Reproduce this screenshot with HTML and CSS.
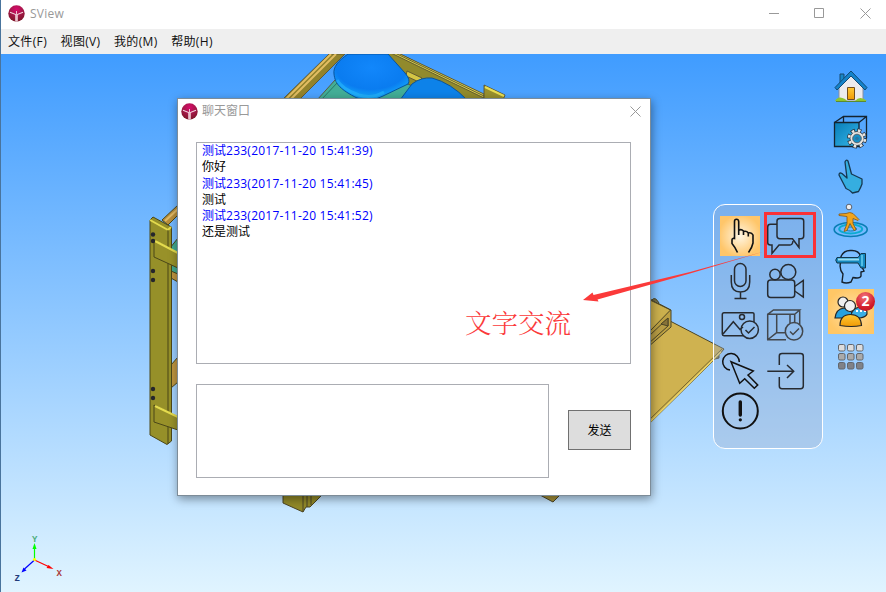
FILE: index.html
```html
<!doctype html>
<html lang="zh-CN">
  <head>
    <meta charset="UTF-8" />
    <meta name="viewport" content="width=device-width, initial-scale=1.0" />
    <title>SView</title>
    <link rel="stylesheet" href="styles.css">
  </head>
  <body>
    <svg class="defs" width="0" height="0">
      <defs>
        <radialGradient id="logo-fill" cx=".5" cy=".25" r=".8">
          <stop offset="0" stop-color="#d80a6c" />
          <stop offset=".5" stop-color="#a31848" />
          <stop offset="1" stop-color="#761522" />
        </radialGradient>
        <radialGradient id="pillow" cx=".5" cy=".3" r=".75">
          <stop offset="0" stop-color="#1287fb" />
          <stop offset=".62" stop-color="#0a7cf0" />
          <stop offset=".85" stop-color="#12a5fa" />
          <stop offset="1" stop-color="#075db9" />
        </radialGradient>
        <linearGradient id="blue" x1="0" y1="0" x2="1" y2="1">
          <stop offset="0" stop-color="#077db8" />
          <stop offset="1" stop-color="#36b6e8" />
        </linearGradient>
        <linearGradient id="orange" x1="0" y1="0" x2="0" y2="1">
          <stop offset="0" stop-color="#ffc936" />
          <stop offset="1" stop-color="#f09a05" />
        </linearGradient>
      </defs>
      <symbol id="logo" viewBox="0 0 17 17">
        <circle cx="8.5" cy="8.5" r="8.2" fill="url(#logo-fill)" />
        <path d="M7.8 16.5V9.5L2 7.2M9.2 16.5V9.5L15 7.2" fill="none" stroke="#f3d7df" stroke-width="1.1" />
        <path d="M8.5 16.6V6" fill="none" stroke="#e9c0cd" stroke-width="1" />
      </symbol>
    </svg>

    <div class="app">
      <header class="titlebar">
        <svg class="logo"><use href="#logo" /></svg>
        <span class="title">SView</span>
        <div class="window-buttons">
          <svg viewBox="0 0 11 11"><path d="M1 5.5h10" /></svg>
          <svg viewBox="0 0 11 11"><path d="M.5.5h9v9h-9z" /></svg>
          <svg viewBox="0 0 11 11"><path d="M.5.5l10 10M10.500.5l-10 10" /></svg>
        </div>
      </header>

      <nav class="menu">
        <span>文件(F)</span>
        <span>视图(V)</span>
        <span>我的(M)</span>
        <span>帮助(H)</span>
      </nav>

      <main class="viewport">
        <svg class="scene" viewBox="0 54 886 538">
          <!-- top of the bed -->
          <g stroke="#5a5430" stroke-width=".900" stroke-linejoin="round">
            <path d="M335 80L317 100H415V82z" fill="#43ae97" />
            <path d="M338 82l-17 18" fill="none" stroke="#24705f" />
            <path d="M329 54L282 100H299L345 54z" fill="#93832c" />
            <path d="M331 54L285 100M336 54L290 100" fill="none" stroke="#e2bd62" stroke-width="2" />
            <path d="M350 53H398L484 95V100H440L408 84z" fill="#918a2c" />
            <path d="M398 53L484 94V98L391 53z" fill="#d9cf4b" />
            <path d="M395 53L484 96" fill="none" />
            <path d="M484 85L505 95L503 100H484z" fill="#98902e" />
            <path d="M485 87l19 9" stroke="#e9df53" stroke-width="2" />
            <path d="M407 71l15 7-3 4-13-6z" fill="#d4c544" />
          </g>
          <path d="M348 54C338 61 333 67 334 74C335 84 341 90 357 98Q370 103 383 96L408 84Q411 80 405 73L388 54z" fill="url(#pillow)" stroke="#07539d" />
          <path d="M337 80Q342 89 359 95Q372 99 384 92" fill="none" stroke="#2bbafb" stroke-width="3" opacity=".55" />
          <path d="M400 100L412 84Q421 77 432 78Q451 83 467 100z" fill="#0d82e9" stroke="#07539d" />

          <!-- left post -->
          <g stroke="#4b4719" stroke-linejoin="round">
            <path d="M162 220L178 205V215L168 225z" fill="#b78e3b" />
            <path d="M165 221l13-12" stroke="#dfb865" stroke-width="2" />
            <path d="M170 248L178 238V275H171z" fill="#42a98f" />
            <path d="M171 271l7 3v8l-7-4z" fill="#be9540" />
            <path d="M171 365l7-8v25l-7 6z" fill="#be9540" />
            <path d="M150 220L153 217L171.500 227V441L167 444.500L150 435z" fill="#969029" />
            <path d="M150 220l18 10 3-3" fill="none" stroke="#e3da4e" stroke-width="2" />
            <path d="M168 230V444" fill="none" />
            <path d="M154 240L178 253V268L154 257z" fill="#989129" />
            <path d="M155 241l23 12" stroke="#e5dc4e" stroke-width="2" />
            <path d="M154 405L178 417V430L154 422z" fill="#989129" />
            <path d="M155 406l23 11" stroke="#e5dc4e" stroke-width="2" />
          </g>
          <g fill="#25262c">
            <circle cx="153" cy="234.500" r="2.200" />
            <circle cx="153" cy="241" r="2.200" />
            <circle cx="153" cy="271" r="2.200" />
            <circle cx="153" cy="280" r="2.200" />
            <circle cx="153" cy="389" r="2.200" />
            <circle cx="153" cy="398" r="2.200" />
          </g>

          <!-- desk on the right, feet below -->
          <g stroke="#4b4526" stroke-linejoin="round">
            <path d="M714 357l5-4v5l-4 1z" fill="#777044" />
            <path d="M648 310L672 322L724 349L720 354L648 425z" fill="#cfb250" />
            <path d="M722 349L648 421" fill="none" stroke="#78672c" />
            <path d="M721 352L648 424" fill="none" stroke="#ecd568" stroke-width="1.500" />
            <path d="M652 300q3-4 7 3" fill="#777044" />
            <path d="M648 298L671 310V327L648 347z" fill="#bda143" />
            <path d="M648 299L670.500 310L648 333z" fill="#cbb04d" />
            <path d="M648 337L668 318V326L648 344z" fill="#b89d45" />
            <path d="M661 324l7-6v8z" fill="#877338" />
            <path d="M283 494V503L303 512L306 507H310L322 495z" fill="#918928" />
            <path d="M303 495v17M307 495v12M311 495v10" fill="none" />
            <path d="M540 495l13 7 7-7z" fill="#a5913a" />
          </g>

          <!-- axes -->
          <g stroke-width="1.200">
            <path d="M34.500 560V547" stroke="#0f0" />
            <path d="M34.500 543l2 6h-4z" fill="#0f0" />
            <path d="M34.500 560l15 7" stroke="red" />
            <path d="M53.500 569l-7-1 2-3z" fill="red" />
            <path d="M34.500 560l-10 9" stroke="blue" />
            <path d="M21.500 572.500l2-5 3 3z" fill="blue" />
            <circle cx="34.500" cy="559.500" r="1.600" fill="#ff0" />
          </g>
          <g class="axis-label">
            <text x="32" y="542" fill="#4eae7c">Y</text>
            <text x="56.500" y="575.500" fill="#a93a3a">X</text>
            <text x="14.500" y="580.500" fill="#223c7c">Z</text>
          </g>
        </svg>

        <aside class="sidebar">
          <svg viewBox="0 0 46 45">
            <path d="M11 22V37H35V22L23 10z" fill="#ecebee" stroke="#8a8fa0" />
            <path d="M12 19V10h4v6" fill="#1787c8" stroke="#17496d" />
            <path d="M7 23.500L23 7L39 23.500L37 26L23 12L9 26z" fill="#1583c9" stroke="#124a75" />
            <path d="M19.500 23.500h7v12h-7z" fill="url(#orange)" stroke="#714c1e" />
            <path d="M7 37q3-6 10-2l2 2zM27 37q5-6 12 0z" fill="#8fc52f" />
            <path d="M8 37.500H38" stroke="#5c8a31" />
          </svg>
          <svg viewBox="0 0 46 45">
            <path d="M6.500 13.500L15.500 7.500H38.500V29L31 37M31 13.500L38.500 7.500M15.500 7.500V13" fill="none" stroke="#142431" stroke-width="1.300" />
            <path d="M6.500 13.500H31V37.500H6.500z" fill="url(#blue)" stroke="#142431" stroke-width="1.300" />
            <circle cx="29" cy="29.500" r="8" fill="none" stroke="#26323e" stroke-width="4" stroke-dasharray="4 2.280" />
            <circle cx="29" cy="29.500" r="7" fill="#e8e6e2" stroke="#26323e" stroke-width=".800" />
            <circle cx="29" cy="29.500" r="8" fill="none" stroke="#e8e6e2" stroke-width="2.600" stroke-dasharray="2.600 3.680" stroke-dashoffset="-.700" />
            <circle cx="29" cy="29.500" r="4.300" fill="#168fc4" stroke="#54616d" />
            <circle cx="29" cy="29.500" r="1.800" fill="#2a76a1" />
          </svg>
          <svg viewBox="0 0 46 45">
            <path d="M17 8Q18 5 20 7L23.500 20L34 25V30Q33 33 30.500 37.500L24.500 39Q22 36 18 34.500L11 21Q11 18 14 19.500L19 24z" fill="#35aee0" stroke="#173951" stroke-width="1.300" stroke-linejoin="round" />
          </svg>
          <svg viewBox="0 0 46 45">
            <g fill="none" stroke="#087eb4">
              <ellipse cx="22.700" cy="30.500" rx="16.500" ry="7" stroke-width="1.600" />
              <ellipse cx="22.700" cy="30" rx="11.500" ry="4.500" stroke="#0cabd2" stroke-width="2" />
              <ellipse cx="22.700" cy="30" rx="6" ry="2" />
            </g>
            <path d="M11 15l7-.500q4-2 7 0l6 6-1 1-5-2v5l3 6-2 1-4-7-3 7-3 1 3-8v-7l-8-1z" fill="#f2a51d" stroke="#875719" stroke-width=".800" />
            <circle cx="21" cy="8" r="2.800" fill="#eee" stroke="#5a6270" />
          </svg>
          <svg viewBox="0 0 46 45">
            <path d="M12.500 14Q15 6 23 6.500Q31 6 33 13L34 23L36 27L33 28L33 32Q32 35 25 33.500L23 38Q18 40 14 38L15 30Q11 25 12.500 19" fill="none" stroke="#15212c" stroke-width="1.400" />
            <path d="M9 13.500H30L33 9.500H37.500V24H33L30 19H9Q6.500 16 9 13.500z" fill="#168ac0" stroke="#12364b" />
            <path d="M10 15.500h21" stroke="#9addf1" stroke-width="2" />
            <path d="M34 11v11" stroke="#53bee5" stroke-width="2" />
          </svg>
          <div class="people active">
            <svg viewBox="0 0 46 45">
              <g stroke="#252525" stroke-width="1.200">
                <path d="M7 29q1-9 9-10 9 1 9 10z" fill="#25a1df" />
                <circle cx="15" cy="13" r="5" fill="#eee" />
                <path d="M23 27q1-8 9-9 8 1 7 7-1 3-7 4z" fill="#3aaee5" />
                <circle cx="22" cy="17" r="5.500" fill="#f1f1f1" />
                <path d="M12 36.500q0-11 10.500-11t11 11q-10 2-21.500 0z" fill="url(#orange)" />
              </g>
              <path d="M28 22h2m2 0h2m2 0h2" stroke="#fff" stroke-width="2" />
            </svg>
            <span class="badge">2</span>
          </div>
          <svg viewBox="0 0 46 45">
            <g stroke="#61666e">
              <g fill="#ddd">
                <rect x="10.500" y="10.500" width="6.500" height="6.500" rx="1.500" />
                <rect x="19.500" y="10.500" width="6.500" height="6.500" rx="1.500" />
                <rect x="28.500" y="10.500" width="6.500" height="6.500" rx="1.500" />
              </g>
              <g fill="#aaa">
                <rect x="10.500" y="19.500" width="6.500" height="6.500" rx="1.500" />
                <rect x="19.500" y="19.500" width="6.500" height="6.500" rx="1.500" />
                <rect x="28.500" y="19.500" width="6.500" height="6.500" rx="1.500" />
              </g>
              <g fill="#808287">
                <rect x="10.500" y="28.500" width="6.500" height="6.500" rx="1.500" />
                <rect x="19.500" y="28.500" width="6.500" height="6.500" rx="1.500" />
                <rect x="28.500" y="28.500" width="6.500" height="6.500" rx="1.500" />
              </g>
            </g>
          </svg>
        </aside>

        <section class="tools">
          <svg class="selected" viewBox="0 0 40 40">
            <path d="M17.500 36.500Q15 31 12 27.500V24Q12 22 14.500 22.500V5.500Q14.500 3.300 16.500 3.300T18.700 5.500V19V14.500Q21 12.500 23.500 15V19V15.500Q26.500 14.500 28.300 17V20.500V17Q31.500 16 33 19V27Q32 32 28.500 36.500" stroke-width="1.600" />
          </svg>
          <div class="chat-tool">
            <svg viewBox="0 0 40 40">
              <path d="M14 2.500H35Q37.700 2.500 37.700 5V20Q37.700 22.700 35 22.700H33V31.500L26.500 22.700H14Q11 22.700 11 20V5Q11 2.500 14 2.500z" />
              <path d="M11 8.300H4.500Q1.700 8.300 1.700 11V26.500Q1.700 29 4.500 29H6V37.500L13 29H24Q26.500 29 27 25" />
            </svg>
          </div>
          <svg viewBox="0 0 40 40">
            <rect x="14.500" y="2.500" width="11.500" height="23" rx="5.750" />
            <path d="M11.300 14V21Q11.300 31 20.500 31T29.700 21V14M20.500 31V37.500M14.500 37.500H26.500" />
          </svg>
          <svg viewBox="0 0 40 40">
            <circle cx="9" cy="13.500" r="5.200" />
            <circle cx="22.300" cy="11" r="7.500" />
            <rect x="1.700" y="19" width="27" height="17.500" rx="3" />
            <path d="M28.700 25.500L37.300 19.500V36L28.700 30" />
          </svg>
          <svg viewBox="0 0 40 40">
            <path d="M34 16V8Q34 6.700 32.500 6.700H4Q2.300 6.700 2.300 8.500V28Q2.300 29.700 4 29.700H23M3 28L13.300 15.700L20 23.500L23 21" />
            <circle cx="22" cy="11" r="2.500" />
            <circle cx="29.700" cy="23.700" r="8.700" />
            <path d="M25.500 24l3 3 6-6" />
          </svg>
          <svg class="gray" viewBox="0 0 40 40">
            <path d="M20 33.700H1.700V8.300H28.700V17M1.700 8.300L7.500 4H33.700L28.700 8.300M33.700 4V18M10.700 8.300V26.700L2 33.500M10.700 26.700H20M24 8V17" />
            <circle cx="28" cy="25.300" r="8.700" />
            <path d="M24 25.500l3 3 6-6" />
          </svg>
          <svg class="black" viewBox="0 0 40 40">
            <path d="M10 19A8.300 8.300 0 1 1 19.300 11" />
            <path d="M11 10.700L33.300 20L28 24L37.700 34L34.300 37.300L24.700 27.700L19.700 32.300z" />
          </svg>
          <svg viewBox="0 0 40 40">
            <path d="M13.300 14V5Q13.300 2.500 16 2.500H34.500Q37.300 2.500 37.300 5V35Q37.300 37.700 34.500 37.700H16Q13.300 37.700 13.300 35V26M1.300 20.300H27.700M21 14L27.700 20.300L21 27" />
          </svg>
          <svg class="black" viewBox="0 0 40 40">
            <circle cx="20.300" cy="20" r="17.500" stroke-width="2" />
            <path d="M20.300 11V24" stroke-width="3.400" stroke-linecap="round" />
            <circle cx="20.300" cy="28.800" r=".9" />
          </svg>
        </section>

        <section class="dialog">
          <header class="dialog-title">
            <svg class="logo"><use href="#logo" /></svg>
            <span>聊天窗口</span>
            <svg class="close" viewBox="0 0 11 11"><path d="M.5.5l10 10M10.500.5l-10 10" /></svg>
          </header>
          <div class="messages">
            <p class="sender">测试<span>233(2017-11-20 15:41:39)</span></p>
            <p>你好</p>
            <p class="sender">测试<span>233(2017-11-20 15:41:45)</span></p>
            <p>测试</p>
            <p class="sender">测试<span>233(2017-11-20 15:41:52)</span></p>
            <p>还是测试</p>
          </div>
          <div class="compose">
            <div class="input"></div>
            <button class="send">发送</button>
          </div>
        </section>

        <svg class="callout" viewBox="0 54 886 538">
          <path d="M764 251.500L690 273.500L597.500 299.500L598.500 301.500L583 300L592.500 292.500L593.500 295L690 272z" fill="#fb3a3a" />
          <text x="465" y="333">文字交流</text>
        </svg>
      </main>
    </div>
  </body>
</html>
```
FILE: styles.css
```css
*,
*::after {
  box-sizing: border-box;
}

html,
body {
  height: 100%;
}

body {
  margin: 0;
  overflow: hidden;
  font-family: "Open Sans", "Noto Sans CJK SC", sans-serif;
  font-size: 12px;
  color: #111;
}

svg {
  display: block;
}

.defs {
  position: absolute;
}

.app {
  height: 592px;
  display: flex;
  flex-direction: column;
  border-left: 1px solid #49749d;
}

.titlebar {
  height: 29px;
  display: flex;
  align-items: center;
  padding: 0 15px 2px 7px;
  background: #fff;
  color: #999;
}

.logo {
  width: 17px;
  height: 17px;
}

.title {
  margin-left: 5px;
  letter-spacing: 0.25px;
}

.window-buttons {
  display: flex;
  gap: 35px;
  margin-left: auto;
}

.window-buttons svg,
.close {
  width: 11px;
  height: 11px;
  fill: none;
  stroke: #999;
}

.menu {
  height: 25px;
  display: flex;
  align-items: center;
  gap: 13.5px;
  padding: 0 0 1px 7px;
  background: #efefef;
  letter-spacing: 0.35px;
}

.viewport {
  position: relative;
  flex: 1;
  overflow: hidden;
  background: linear-gradient(#409cff, #e0f4ff);
}

.scene,
.callout {
  position: absolute;
  top: 0;
  left: -1px;
  width: 886px;
  height: 538px;
}

.axis-label {
  font: bold 9px "Liberation Mono", monospace;
}

.sidebar {
  position: absolute;
  top: 10px;
  left: 827px;
  width: 46px;
}

.sidebar svg {
  width: 46px;
  height: 45px;
}

.people {
  position: relative;
}

.active {
  background: radial-gradient(#ffdfa5, #ffc766 75%);
}

.badge {
  position: absolute;
  top: 3px;
  left: 28px;
  width: 19px;
  height: 19px;
  border-radius: 50%;
  background: radial-gradient(circle at 45% 25%, #f1737a, #d31d2b 60%, #b50d1b);
  color: #fff;
  font-size: 14px;
  font-weight: bold;
  line-height: 18px;
  text-align: center;
}

.tools {
  position: absolute;
  top: 150px;
  left: 712px;
  width: 110px;
  height: 245px;
  display: grid;
  grid-template-columns: 46px 40px;
  grid-template-rows: 45px 45px 45px 40px 40px;
  padding: 11px 0 0 6px;
  border: 1px solid #fff;
  border-radius: 12px;
  background: rgba(150, 168, 200, 0.33);
}

.tools svg {
  width: 40px;
  height: 40px;
  fill: none;
  stroke: #272b31;
  stroke-width: 1.5;
}

.tools .gray {
  stroke: #42474d;
}

.tools .black {
  stroke: #111;
}

.tools .selected {
  background: radial-gradient(#fff6e3, #ffc66a 75%);
  stroke: #111;
}

.chat-tool {
  position: relative;
}

.chat-tool::after {
  content: "";
  position: absolute;
  top: -4px;
  left: -2px;
  width: 52px;
  height: 46px;
  border: 3px solid #fa3136;
}

.dialog {
  position: absolute;
  top: 44px;
  left: 176px;
  width: 474px;
  height: 398px;
  padding: 0 19px 0 18px;
  border: 1px solid #7d8c98;
  background: #fff;
  box-shadow: 1px 3px 9px rgba(0, 0, 0, 0.4);
}

.dialog-title {
  height: 43px;
  display: flex;
  align-items: flex-start;
  margin: 0 -10px 0 -15px;
  padding-top: 4px;
  color: #999;
  line-height: 16px;
}

.dialog-title span {
  margin-left: 4px;
}

.close {
  margin: 3px 0 0 auto;
}

.messages {
  height: 222px;
  padding: 0 5px;
  border: 1px solid #abadb3;
}

.messages p {
  margin: 0;
  height: 16.3px;
  line-height: 16px;
  color: #000;
}

.messages .sender {
  color: #00f;
}

.sender span {
  letter-spacing: 0.25px;
}

.compose {
  display: flex;
  align-items: center;
  justify-content: space-between;
  margin-top: 20px;
}

.input {
  width: 353px;
  height: 94px;
  border: 1px solid #abadb3;
}

.send {
  width: 63px;
  height: 40px;
  margin-bottom: 2px;
  padding: 0;
  border: 1px solid #707070;
  background: #ddd;
  color: #000;
  font: inherit;
}

.callout text {
  fill: #fb3a3a;
  font: 300 26.5px "Noto Serif CJK SC", "Noto Sans CJK SC", serif;
}
```
